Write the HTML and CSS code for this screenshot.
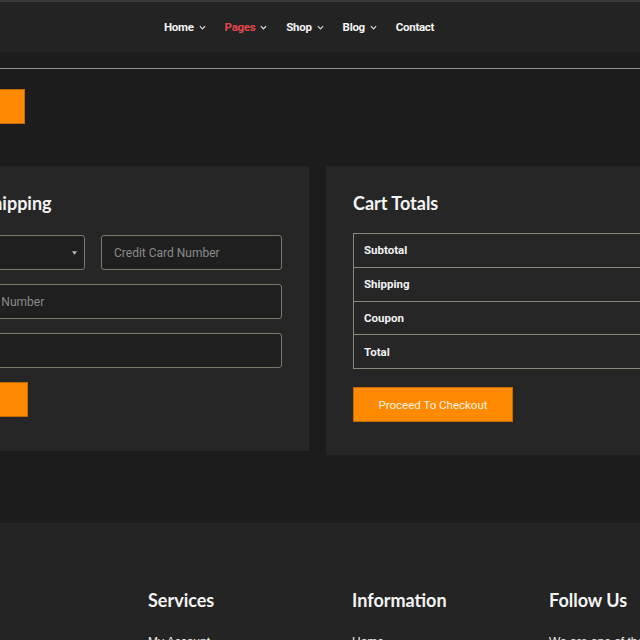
FILE: index.html
```html
<!DOCTYPE html>
<html lang="en">
<head>
<meta charset="utf-8">
<title>Cart</title>
<link rel="stylesheet" href="styles.css">
</head>
<body>
<header class="header">
  <nav class="nav">
    <a class="nav-item">Home <svg class="chev" viewBox="0 0 8 5" width="7" height="5"><path d="M1 1l3 3 3-3" fill="none" stroke="currentColor" stroke-width="1.4"/></svg></a>
    <a class="nav-item active">Pages <svg class="chev" viewBox="0 0 8 5" width="7" height="5"><path d="M1 1l3 3 3-3" fill="none" stroke="currentColor" stroke-width="1.4"/></svg></a>
    <a class="nav-item">Shop <svg class="chev" viewBox="0 0 8 5" width="7" height="5"><path d="M1 1l3 3 3-3" fill="none" stroke="currentColor" stroke-width="1.4"/></svg></a>
    <a class="nav-item">Blog <svg class="chev" viewBox="0 0 8 5" width="7" height="5"><path d="M1 1l3 3 3-3" fill="none" stroke="currentColor" stroke-width="1.4"/></svg></a>
    <a class="nav-item">Contact</a>
  </nav>
</header>

<main class="main">
  <div class="rule"></div>
  <div class="wrap">
    <div class="top-actions">
      <button class="btn btn-update">Update Cart</button>
    </div>
    <div class="cards">
      <section class="card">
        <h3 class="card-title">Calculate Shipping</h3>
        <div class="form-row two">
          <div class="field select">
            <span class="select-text">Select Country</span>
            <svg class="caret" viewBox="0 0 6 4" width="5" height="4"><path d="M0 0h6L3 4z" fill="#bbb"/></svg>
          </div>
          <div class="field"><span class="ph">Credit Card Number</span></div>
        </div>
        <div class="form-row"><div class="field"><span class="ph">Card Validation Number</span></div></div>
        <div class="form-row"><div class="field"><span class="ph"></span></div></div>
        <button class="btn btn-calc">Update</button>
      </section>
      <section class="card">
        <h3 class="card-title">Cart Totals</h3>
        <div class="totals">
          <div class="trow"><span>Subtotal</span></div>
          <div class="trow"><span>Shipping</span></div>
          <div class="trow"><span>Coupon</span></div>
          <div class="trow"><span>Total</span></div>
        </div>
        <button class="btn btn-checkout">Proceed To Checkout</button>
      </section>
    </div>
  </div>
</main>

<footer class="footer">
  <div class="footer-grid">
    <div class="fcol"></div>
    <div class="fcol">
      <h4 class="ftitle">Services</h4>
      <a class="flink">My Account</a>
    </div>
    <div class="fcol">
      <h4 class="ftitle">Information</h4>
      <a class="flink">Home</a>
    </div>
    <div class="fcol">
      <h4 class="ftitle">Follow Us</h4>
      <p class="flink">We are one of the best</p>
    </div>
  </div>
</footer>
</body>
</html>
```

FILE: styles.css
```css
* { box-sizing: border-box; }
html, body { margin: 0; padding: 0; }
body {
  background: #1c1c1c;
  font-family: Roboto, "Liberation Sans", sans-serif;
  color: #f2f2f2;
  overflow: hidden;
  width: 640px;
}
.header {
  height: 52px;
  background: #232323;
  border-top: 2px solid #3a3a3a;
  display: flex;
  align-items: center;
}
.nav {
  display: flex;
  gap: 19px;
  padding-left: 164px;
}
.nav-item {
  font-size: 11.5px;
  font-weight: 700;
  color: #f4f4f4;
  display: flex;
  align-items: center;
  gap: 5px;
  letter-spacing: -0.3px;
}
.nav-item.active { color: #e0484d; }
.chev { color: #d8d8d8; margin-top: 1px; }
.nav-item.active .chev { color: #e6e6e6; }

.main { padding-top: 16px; padding-bottom: 68px; }
.rule { height: 1px; background: #8f8f8f; }
.wrap {
  margin-left: -123px;
  width: 881px;
}
.top-actions { padding-top: 20px; }
.btn {
  background: #ff8a00;
  border: 1px solid #c46a00;
  color: #fff3e2;
  font-family: Roboto, sans-serif;
  font-size: 12px;
  height: 35px;
  display: block;
  padding: 0;
}
.btn-update { width: 148px; }
.cards {
  margin-top: 42px;
  display: grid;
  grid-template-columns: 432px 432px;
  gap: 17px;
  align-items: start;
}
.card {
  background: #262626;
  padding: 26px 27px 34px 27px;
}
.card:last-child { padding-bottom: 33px; }
.card-title {
  margin: 0 0 21px;
  font-family: Lato, "Open Sans", sans-serif;
  font-weight: 700;
  font-size: 18px;
  line-height: 22px;
  color: #f4f4f4;
}
.card:last-child .card-title { margin-bottom: 19px; }
.form-row { margin-bottom: 14px; }
.form-row.two {
  display: grid;
  grid-template-columns: 1fr 1fr;
  gap: 16px;
}
.field {
  height: 35px;
  border: 1px solid #7d7867;
  border-radius: 3px;
  background: #1f1f1f;
  display: flex;
  align-items: center;
  padding: 0 12px;
  font-size: 12px;
}
.ph { color: #8a8a8a; }
.select { justify-content: space-between; padding-right: 7px; }
.select-text { color: #dcdcdc; }
.btn-calc { width: 124px; }

.totals { border-top: 1px solid #8a887c; border-left: 1px solid #8a887c; }
.trow {
  height: 33.75px;
  border-bottom: 1px solid #8a887c;
  display: flex;
  align-items: center;
  padding-left: 10px;
  font-size: 11.5px;
  font-weight: 700;
  color: #f2f2f2;
}
.btn-checkout { width: 160px; margin-top: 18px; font-size: 11.5px; }

.footer {
  background: #242424;
  padding-top: 66px;
  height: 200px;
}
.footer-grid {
  margin-left: -123px;
  display: grid;
  grid-template-columns: 271px 204px 197px 1fr;
}
.ftitle {
  margin: 0 0 24px;
  font-family: Lato, "Open Sans", sans-serif;
  font-weight: 700;
  font-size: 18px;
  line-height: 22px;
  color: #f4f4f4;
}
.flink {
  display: block;
  margin: 0;
  font-family: "Liberation Sans", Arial, sans-serif;
  font-size: 12px;
  color: #eeeeee;
  white-space: nowrap;
}
```
